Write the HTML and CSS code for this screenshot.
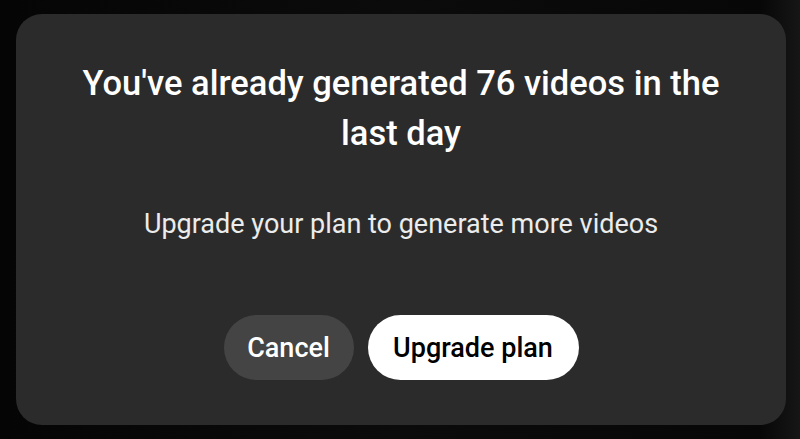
FILE: index.html
```html
<!DOCTYPE html>
<html lang="en">
<head>
    <meta charset="UTF-8">
    <meta name="viewport" content="width=device-width, initial-scale=1.0">
    <title>Limit reached</title>
    <link rel="stylesheet" href="styles.css">
</head>
<body>
    <div class="backdrop">
        <div class="dialog">
            <h1 class="title">You've already generated 76 videos in the last day</h1>
            <p class="message">Upgrade your plan to generate more videos</p>
            <div class="actions">
                <button class="btn btn-cancel">Cancel</button>
                <button class="btn btn-upgrade">Upgrade plan</button>
            </div>
        </div>
    </div>
</body>
</html>
```

FILE: styles.css
```css
html, body {
    margin: 0;
    height: 100%;
}
body {
    font-family: Roboto, "Liberation Sans", Arial, sans-serif;
    background: #000;
}
.backdrop {
    height: 439px;
    box-sizing: border-box;
    padding: 14px 14px 14px 16px;
    background: linear-gradient(90deg, #050505 0%, #0b0b0b 50%, #070707 95%, #161616 100%);
}
.dialog {
    height: 411px;
    box-sizing: border-box;
    background: #2b2b2b;
    border-radius: 26px;
    display: flex;
    flex-direction: column;
    align-items: center;
    padding-top: 44px;
}
.title {
    margin: 0;
    width: 680px;
    text-align: center;
    color: #fff;
    font-size: 34.5px;
    font-weight: 500;
    line-height: 50px;
}
.message {
    margin: 50px 0 0;
    color: #ececec;
    font-size: 27px;
    line-height: 32px;
}
.actions {
    display: flex;
    gap: 14px;
    margin-top: 75px;
}
.btn {
    height: 65px;
    border: none;
    border-radius: 33px;
    font-family: inherit;
    font-size: 27px;
    font-weight: 500;
    cursor: pointer;
}
.btn-cancel {
    width: 130px;
    background: #444;
    color: #fff;
}
.btn-upgrade {
    width: 211px;
    background: #fff;
    color: #000;
}
```
